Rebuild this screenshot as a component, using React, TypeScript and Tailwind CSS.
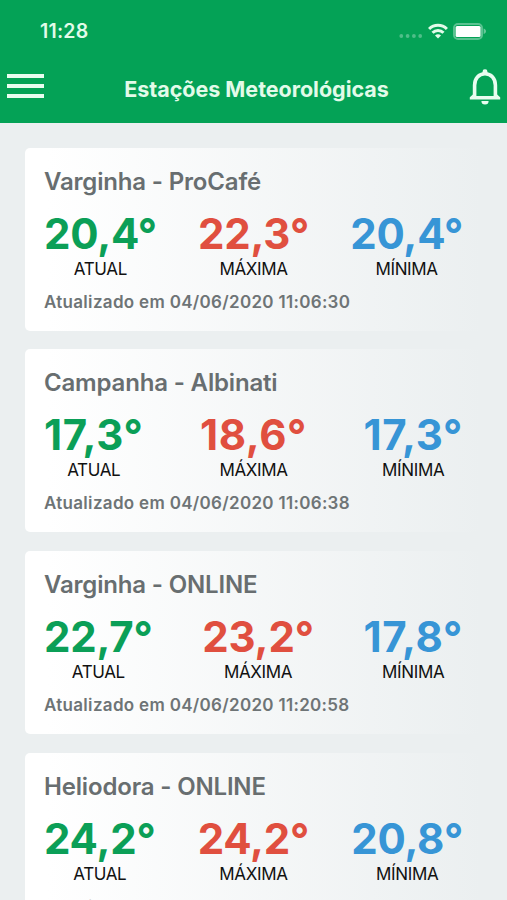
interface Station {
  name: string
  current: string
  max: string
  min: string
  updatedAt: string
}

const stations: Station[] = [
  { name: 'Varginha - ProCafé', current: '20,4', max: '22,3', min: '20,4', updatedAt: '04/06/2020 11:06:30' },
  { name: 'Campanha - Albinati', current: '17,3', max: '18,6', min: '17,3', updatedAt: '04/06/2020 11:06:38' },
  { name: 'Varginha - ONLINE', current: '22,7', max: '23,2', min: '17,8', updatedAt: '04/06/2020 11:20:58' },
  { name: 'Heliodora - ONLINE', current: '24,2', max: '24,2', min: '20,8', updatedAt: '04/06/2020 11:20:58' },
]

function StatusBar() {
  return (
    <div className="flex h-[62px] items-center justify-between pl-10 pr-[21px] text-[#e2fbe9]">
      <span className="mt-[2px] text-[19.5px] font-semibold leading-none tracking-[0.2px]">11:28</span>
      <div className="flex items-center">
        <svg width="24" height="6" viewBox="0 0 24 6" className="mr-[5px] mt-[9px]" fill="#fff" fillOpacity="0.3">
          <circle cx="2.3" cy="3" r="1.9" />
          <circle cx="8.6" cy="3" r="1.9" />
          <circle cx="14.9" cy="3" r="1.9" />
          <circle cx="21.2" cy="3" r="1.9" />
        </svg>
        <svg width="20" height="16" viewBox="0 0 20 16" className="mr-[5px]" fill="none" stroke="currentColor" strokeWidth="3">
          <path d="M1.1 6a12.5 12.5 0 0 1 17.8 0" />
          <path d="M4.5 9.7a7.7 7.7 0 0 1 11 0" />
          <path d="M10 15.6l-3-3a4.2 4.2 0 0 1 6 0z" fill="currentColor" stroke="none" />
        </svg>
        <svg width="33" height="17" viewBox="0 0 33 17">
          <rect x="1" y="1" width="28" height="15" rx="4" fill="none" stroke="#fff" strokeOpacity="0.35" strokeWidth="2" />
          <rect x="2.6" y="3" width="25" height="11" rx="1.5" fill="#fff" />
          <path d="M30.6 5.6c1.8.6 2.4 1.6 2.4 2.7s-.6 2.1-2.4 2.7z" fill="#fff" fillOpacity="0.4" />
        </svg>
      </div>
    </div>
  )
}

function Header() {
  return (
    <header className="h-[123px] shrink-0 bg-[#04a256]">
      <StatusBar />
      <div className="flex h-[52px] items-center justify-between pl-[7px] pr-1.5">
        <button className="-mt-[5px] flex w-[37px] flex-col gap-[6px]">
          <span className="h-1 w-full bg-[#e8fdf0]" />
          <span className="h-1 w-full bg-[#e8fdf0]" />
          <span className="h-1 w-full bg-[#e8fdf0]" />
        </button>
        <h1 className="mt-[3px] text-[21.5px] font-bold leading-none tracking-[-0.02px] text-[#e2fbe9]">
          Estações Meteorológicas
        </h1>
        <svg width="32" height="38" viewBox="0 0 32 38" className="-mt-[2px]" fill="none" stroke="#e8fdf0">
          <path d="M16 1.2a2.3 2.3 0 0 1 2.4 2.4v1.6h-4.8V3.6A2.3 2.3 0 0 1 16 1.2z" fill="#e8fdf0" stroke="none" />
          <path d="M5.6 29V17.200C5.6 10.400 9.800 5.800 16 5.800s10.400 4.600 10.400 11.400V29" strokeWidth="3.6" />
          <path d="M4.2 26.200L.8 29.200v2.200h30.400v-2.200l-3.400-3v1.900H4.200z" fill="#e8fdf0" stroke="none" />
          <path d="M12.400 33h7.200a3.600 3.600 0 0 1-7.200 0z" fill="#e8fdf0" stroke="none" />
        </svg>
      </div>
    </header>
  )
}

function Reading({ value, label, color }: { value: string; label: string; color: string }) {
  // a leading 1 is narrow, so those values get a bit more room
  const tracking = value.startsWith('1') ? 'tracking-[0.6px]' : 'tracking-[-0.2px]'

  return (
    <div className="flex flex-col items-center">
      <span className={`whitespace-nowrap text-[42px] font-bold leading-[50px] ${tracking} ${color}`}>{value}°</span>
      <span className="text-[17px] leading-5 tracking-[-0.35px] text-[#111]">{label}</span>
    </div>
  )
}

function StationCard({ station }: { station: Station }) {
  return (
    <section className="h-[183px] shrink-0 rounded-[5px] bg-linear-to-r from-white from-5% to-[#ebeff0] px-[19px] pt-[19px]">
      <h2 className="text-2xl font-semibold leading-[30px] tracking-[-0.17px] text-[#686e70]">{station.name}</h2>
      <div className="mt-3 flex justify-between">
        <Reading value={station.current} label="ATUAL" color="text-[#0b9f57]" />
        <Reading value={station.max} label="MÁXIMA" color="text-[#e04f3f]" />
        <Reading value={station.min} label="MÍNIMA" color="text-[#3795d6]" />
      </div>
      <p className="mt-[13px] text-[17px] font-semibold leading-5 tracking-[0.31px] text-[#6e7476]">
        Atualizado em {station.updatedAt}
      </p>
    </section>
  )
}

export default function App() {
  return (
    <div className="flex h-[900px] w-[507px] flex-col overflow-hidden bg-[#ebeff0] font-['Inter',sans-serif]">
      <Header />
      <main className="flex flex-col gap-[18.7px] px-[25px] pt-[24.6px]">
        {stations.map((station) => (
          <StationCard key={station.name} station={station} />
        ))}
      </main>
    </div>
  )
}
